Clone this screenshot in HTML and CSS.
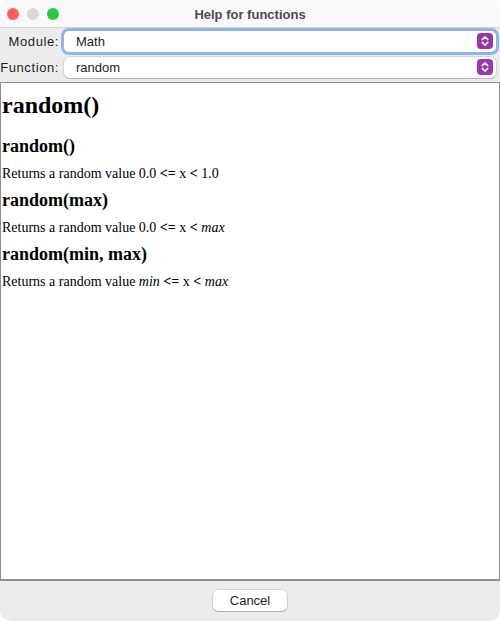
FILE: index.html
```html
<!DOCTYPE html>
<html>
<head>
<meta charset="utf-8">
<link rel="stylesheet" href="styles.css">
</head>
<body>
<div class="window">
  <div class="titlebar">
    <div class="lights">
      <span class="light red"></span>
      <span class="light gray"></span>
      <span class="light green"></span>
    </div>
    <div class="title">Help for functions</div>
  </div>
  <div class="form">
    <div class="row">
      <label class="label">Module:</label>
      <div class="select focused">
        <span class="value">Math</span>
        <span class="arrow"><svg width="16" height="16" viewBox="0 0 16 16"><path d="M5.2 6.6 L8 3.9 L10.8 6.6 M5.2 9.4 L8 12.1 L10.8 9.4" fill="none" stroke="#fff" stroke-width="1.5" stroke-linecap="round" stroke-linejoin="round"/></svg></span>
      </div>
    </div>
    <div class="row">
      <label class="label">Function:</label>
      <div class="select">
        <span class="value">random</span>
        <span class="arrow"><svg width="16" height="16" viewBox="0 0 16 16"><path d="M5.2 6.6 L8 3.9 L10.8 6.6 M5.2 9.4 L8 12.1 L10.8 9.4" fill="none" stroke="#fff" stroke-width="1.5" stroke-linecap="round" stroke-linejoin="round"/></svg></span>
      </div>
    </div>
  </div>
  <div class="content">
    <h1 class="h1">random()</h1>
    <h2 class="h2">random()</h2>
    <p class="p">Returns a random value 0.0 <span class="op">&lt;=</span> x <span class="op">&lt;</span> 1.0</p>
    <h2 class="h2">random(max)</h2>
    <p class="p">Returns a random value 0.0 <span class="op">&lt;=</span> x <span class="op">&lt;</span> <i>max</i></p>
    <h2 class="h2">random(min, max)</h2>
    <p class="p">Returns a random value <i>min</i> <span class="op">&lt;=</span> x <span class="op">&lt;</span> <i>max</i></p>
  </div>
  <div class="footer">
    <button class="button">Cancel</button>
  </div>
</div>
</body>
</html>
```
FILE: styles.css
```css
html, body {
  margin: 0;
  padding: 0;
  background: #ffffff;
}
.window {
  width: 500px;
  height: 621px;
  background: #ececec;
  border-radius: 10px;
  overflow: hidden;
  display: flex;
  flex-direction: column;
  font-family: "Liberation Sans", Arial, sans-serif;
}
.titlebar {
  height: 27px;
  flex: none;
  background: #f9f9f9;
  border-bottom: 1px solid #d6d6d6;
  display: flex;
  align-items: center;
  justify-content: center;
  position: relative;
}
.lights {
  position: absolute;
  left: 7px;
  top: 8px;
  display: flex;
  gap: 8px;
}
.light {
  width: 12px;
  height: 12px;
  border-radius: 50%;
  display: block;
}
.red { background: #fe5f57; }
.gray { background: #d9d9d9; }
.green { background: #28c840; }
.title {
  font-size: 13px;
  font-weight: bold;
  color: #4c4c4c;
  margin-top: 1px;
}
.form {
  display: flex;
  flex-direction: column;
  gap: 4px;
  padding: 2px 4px 0 0;
}
.row {
  display: flex;
  align-items: center;
  height: 22px;
}
.label {
  width: 59px;
  text-align: right;
  font-size: 13px;
  letter-spacing: 0.6px;
  color: #1e1e1e;
  padding-right: 5px;
  white-space: nowrap;
}
.select {
  flex: 1;
  height: 21px;
  background: #fff;
  border-radius: 5px;
  box-shadow: 0 0 0 0.5px rgba(0,0,0,0.18), 0 1px 1px rgba(0,0,0,0.15);
  display: flex;
  align-items: center;
  justify-content: space-between;
  padding: 0 3px 0 12px;
  box-sizing: border-box;
}
.select.focused {
  box-shadow: 0 0 0 3px #8db6eb;
}
.value {
  font-size: 13px;
  color: #1e1e1e;
}
.arrow {
  width: 16px;
  height: 16px;
  border-radius: 4px;
  background: #9b35ad;
  display: flex;
}
.content {
  margin-top: 4px;
  height: 496px;
  flex: none;
  background: #fff;
  border: 1px solid #8e8e8e;
  border-bottom-width: 2px;
  padding: 0 1px;
  font-family: "Liberation Serif", "Times New Roman", serif;
  color: #000;
}
.h1 {
  font-size: 24px;
  font-weight: bold;
  margin: 8px 0 0 0;
  line-height: 28px;
}
.h2 {
  font-size: 18px;
  font-weight: bold;
  margin: 16px 0 0 0;
  line-height: 22px;
}
.h2 + .p { margin-top: 9px; }
.p {
  font-size: 14px;
  margin: 0;
  line-height: 16px;
}
.p + .h2 { margin-top: 7px; }
.op {
  font-weight: bold;
}
.footer {
  flex: 1;
  display: flex;
  justify-content: center;
  align-items: flex-start;
  padding-top: 9px;
}
.button {
  width: 74px;
  height: 21px;
  background: #fff;
  border: none;
  border-radius: 5px;
  box-shadow: 0 0 0 0.5px rgba(0,0,0,0.2), 0 1px 1px rgba(0,0,0,0.18);
  font-family: "Liberation Sans", Arial, sans-serif;
  font-size: 13px;
  color: #1e1e1e;
  padding: 0;
}
```
